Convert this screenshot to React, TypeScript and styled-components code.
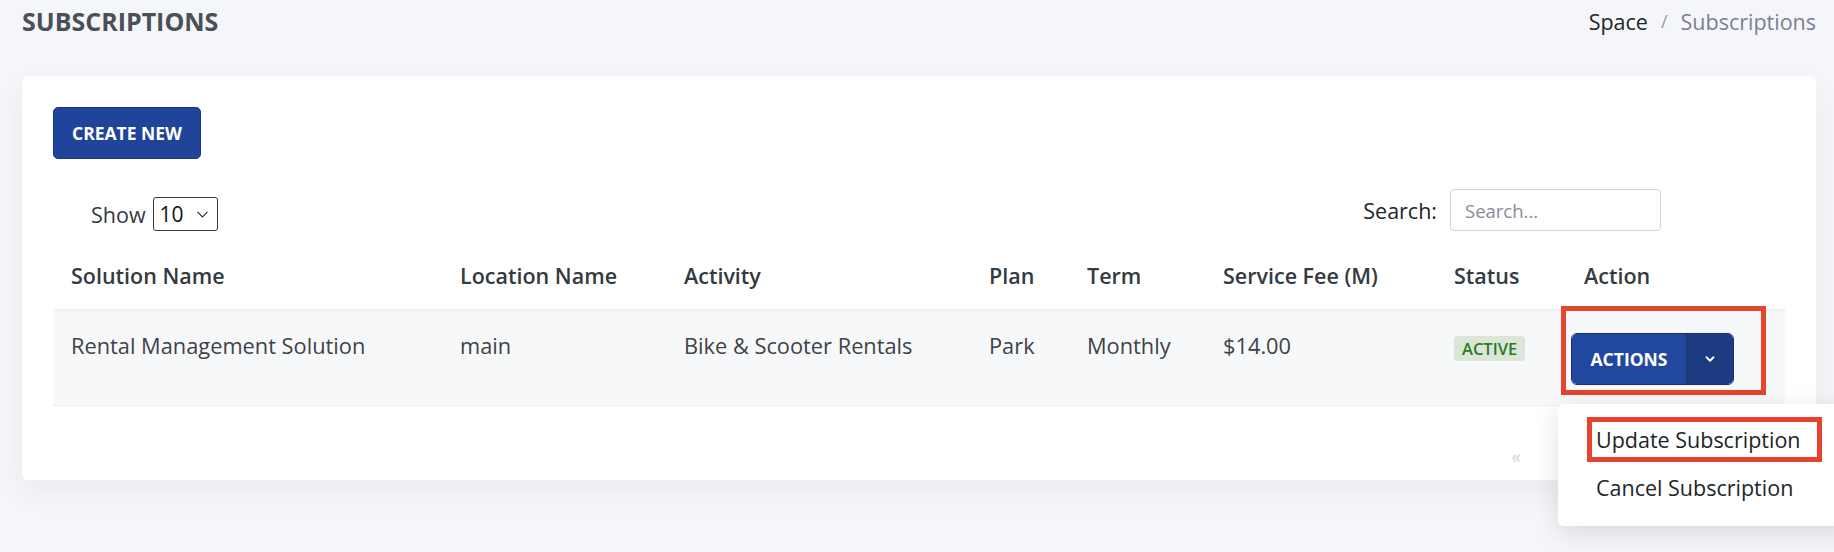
import React from 'react';
import styled, { createGlobalStyle } from 'styled-components';
import { ChevronDown } from 'lucide-react';

const GlobalStyle = createGlobalStyle`
    html, body {
        margin: 0;
        padding: 0;
        background: #f5f6f9;
        overflow: hidden;
    }
    body {
        font-family: "Open Sans", "Liberation Sans", sans-serif;
        color: #3e4347;
    }
    * {
        box-sizing: border-box;
    }
`;

const Page = styled.div`
    width: 1834px;
    height: 552px;
    padding: 0 18px 0 22px;
`;

const TitleBar = styled.div`
    height: 42px;
    display: flex;
    align-items: center;
    justify-content: space-between;
`;

const PageTitle = styled.h4`
    margin: 0;
    font-size: 25px;
    font-weight: 700;
    color: #495057;
    text-transform: uppercase;
`;

const Breadcrumb = styled.ol`
    display: flex;
    align-items: center;
    margin: 0;
    padding: 0;
    list-style: none;
    font-size: 21.5px;
`;

const Crumb = styled.li<{ $active?: boolean }>`
    color: ${({ $active }) => ($active ? '#7b7f92' : '#212529')};
`;

const CrumbDivider = styled.li`
    color: #9599ad;
    font-size: 18px;
    padding: 0 13px;
`;

const Card = styled.div`
    margin-top: 34px;
    background: #fff;
    border-radius: 6px;
    padding: 31px 31px 9px 31px;
    box-shadow: 0 12px 30px rgba(40, 44, 60, 0.06);
`;

const PrimaryButton = styled.button`
    width: 148px;
    height: 52px;
    background: #21449b;
    border: 1px solid #17338a;
    border-radius: 5px;
    color: #fff;
    font-family: inherit;
    font-size: 17.5px;
    font-weight: 700;
    cursor: pointer;
`;

const Toolbar = styled.div`
    margin-top: 30px;
    display: flex;
    align-items: flex-end;
    justify-content: space-between;
    padding: 0 124px 0 38px;
`;

const Control = styled.div`
    display: flex;
    align-items: center;
    font-size: 21.5px;
    color: #343a40;
`;

const SelectBox = styled.div`
    width: 65px;
    height: 34px;
    margin-left: 7px;
    padding: 0 5px 0 6px;
    border: 1px solid #3a3a3a;
    border-radius: 3px;
    display: flex;
    align-items: center;
    justify-content: space-between;
    color: #111;
    font-size: 21px;
`;

const SearchLabel = styled.label`
    font-weight: 500;
    color: #212529;
    margin-right: 13px;
`;

const SearchInput = styled.input`
    width: 211px;
    height: 42px;
    border: 1px solid #ced4da;
    border-radius: 4px;
    padding: 0 14px;
    font-family: inherit;
    font-size: 18.5px;
    color: #212529;
    outline: none;

    &::placeholder {
        color: #878a99;
    }
`;

const Table = styled.table`
    margin-top: 10px;
    width: 100%;
    border-collapse: collapse;
    table-layout: fixed;
`;

const Col = styled.col<{ $w: number }>`
    width: ${({ $w }) => $w}px;
`;

const HeadRow = styled.tr`
    border-bottom: 2px solid #eceff3;
`;

const Th = styled.th`
    text-align: left;
    padding: 20px 18px 18px 18px;
    line-height: 30px;
    font-size: 21.5px;
    font-weight: 600;
    color: #343a40;
    white-space: nowrap;
`;

const BodyRow = styled.tr`
    background: #f7f8fa;
    border-bottom: 1px solid #eceef2;
`;

const Td = styled.td<{ $tight?: boolean }>`
    vertical-align: top;
    padding: ${({ $tight }) => ($tight ? '20px 0 20px 5px' : '20px 18px')};
    line-height: 30px;
    font-size: 21.8px;
    color: #3e4347;
    white-space: nowrap;
`;

const Badge = styled.span`
    display: inline-block;
    height: 25px;
    line-height: 25px;
    padding: 0 8px;
    border-radius: 4px;
    background: #dbe6d8;
    color: #2f7a23;
    font-size: 16.5px;
    font-weight: 600;
    vertical-align: middle;
`;

const ButtonWrap = styled.div`
    position: relative;
    display: inline-flex;
    margin-top: 2px;
`;

const SplitButton = styled.div`
    display: inline-flex;
    height: 52px;
    border: 1px solid #17307a;
    border-radius: 6px;
    overflow: hidden;
`;

const SplitMain = styled.button`
    width: 114px;
    border: none;
    background: #22479f;
    color: #fff;
    font-family: inherit;
    font-size: 17.5px;
    font-weight: 700;
`;

const SplitToggle = styled.button`
    width: 47px;
    border: none;
    background: #1c3b80;
    color: #fff;
    display: flex;
    align-items: center;
    justify-content: center;
`;

const Highlight = styled.div<{ $l: number; $t: number; $w: number; $h: number }>`
    position: absolute;
    left: ${({ $l }) => $l}px;
    top: ${({ $t }) => $t}px;
    width: ${({ $w }) => $w}px;
    height: ${({ $h }) => $h}px;
    border: 5px solid #e8432d;
    pointer-events: none;
`;

const Menu = styled.ul`
    position: absolute;
    left: -13px;
    top: 71px;
    width: 300px;
    margin: 0;
    padding: 12px 0 14px 0;
    list-style: none;
    background: #fff;
    border-radius: 6px;
    box-shadow: 0 6px 24px rgba(40, 44, 60, 0.14);
    z-index: 5;
`;

const MenuItem = styled.li`
    height: 48px;
    line-height: 48px;
    padding-left: 38px;
    font-size: 21.5px;
    color: #212529;
`;

const Pagination = styled.ul`
    display: flex;
    justify-content: flex-end;
    margin: 0;
    padding: 35px 251px 0 0;
    list-style: none;
`;

const PageLink = styled.li`
    width: 36px;
    height: 30px;
    line-height: 30px;
    text-align: center;
    font-size: 18px;
    color: #ced4da;
`;

const columns = [
    { title: 'Solution Name', w: 389 },
    { title: 'Location Name', w: 224 },
    { title: 'Activity', w: 305 },
    { title: 'Plan', w: 98 },
    { title: 'Term', w: 136 },
    { title: 'Service Fee (M)', w: 231 },
    { title: 'Status', w: 130 },
    { title: 'Action', w: 219 },
];

const App = () => {
    return (
        <>
            <GlobalStyle />
            <Page>
                <TitleBar>
                    <PageTitle>Subscriptions</PageTitle>
                    <Breadcrumb>
                        <Crumb>Space</Crumb>
                        <CrumbDivider>/</CrumbDivider>
                        <Crumb $active>Subscriptions</Crumb>
                    </Breadcrumb>
                </TitleBar>

                <Card>
                    <PrimaryButton>CREATE NEW</PrimaryButton>

                    <Toolbar>
                        <Control>
                            Show
                            <SelectBox>
                                10
                                <ChevronDown size={19} strokeWidth={1.3} color="#222" />
                            </SelectBox>
                        </Control>
                        <Control>
                            <SearchLabel htmlFor="search">Search:</SearchLabel>
                            <SearchInput id="search" placeholder="Search..." />
                        </Control>
                    </Toolbar>

                    <Table>
                        <colgroup>
                            {columns.map((c) => (
                                <Col key={c.title} $w={c.w} />
                            ))}
                        </colgroup>
                        <thead>
                            <HeadRow>
                                {columns.map((c) => (
                                    <Th key={c.title}>{c.title}</Th>
                                ))}
                            </HeadRow>
                        </thead>
                        <tbody>
                            <BodyRow>
                                <Td>Rental Management Solution</Td>
                                <Td>main</Td>
                                <Td>Bike &amp; Scooter Rentals</Td>
                                <Td>Park</Td>
                                <Td>Monthly</Td>
                                <Td>$14.00</Td>
                                <Td>
                                    <Badge>ACTIVE</Badge>
                                </Td>
                                <Td $tight>
                                    <ButtonWrap>
                                        <SplitButton>
                                            <SplitMain>ACTIONS</SplitMain>
                                            <SplitToggle>
                                                <ChevronDown size={14} strokeWidth={3.2} />
                                            </SplitToggle>
                                        </SplitButton>
                                        <Highlight $l={-10} $t={-27} $w={205} $h={89} />
                                        <Menu>
                                            <MenuItem>Update Subscription</MenuItem>
                                            <MenuItem>Cancel Subscription</MenuItem>
                                            <Highlight $l={29} $t={13} $w={235} $h={45} />
                                        </Menu>
                                    </ButtonWrap>
                                </Td>
                            </BodyRow>
                        </tbody>
                    </Table>

                    <Pagination>
                        <PageLink>«</PageLink>
                    </Pagination>
                </Card>
            </Page>
        </>
    );
};

export default App;
